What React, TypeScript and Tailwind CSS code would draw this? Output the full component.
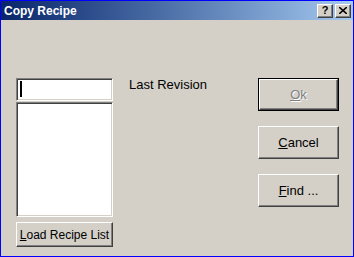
import React from 'react';

const raised =
  'border border-t-white border-l-white border-r-[#404040] border-b-[#404040] shadow-[inset_-1px_-1px_#808080,inset_1px_1px_#d4d0c8] bg-[#d4d0c8]';
const sunken =
  'border border-t-[#808080] border-l-[#808080] border-r-white border-b-white shadow-[inset_1px_1px_#404040,inset_-1px_-1px_#d4d0c8] bg-white';

function TitleButton({ children }: { children: React.ReactNode }) {
  return (
    <div
      className={`${raised} w-[16px] h-[14px] flex items-center justify-center text-[11px] font-bold leading-none text-black`}
    >
      {children}
    </div>
  );
}

export default function App() {
  return (
    <div
      className="w-[354px] h-[257px] border border-[#0000ff] bg-[#d4d0c8] flex flex-col overflow-hidden"
      style={{ fontFamily: '"Liberation Sans", Arial, sans-serif' }}
    >
      {/* title bar */}
      <div className="h-[19px] flex items-center pl-[3px] pr-[2px] bg-gradient-to-r from-[#0a246a] to-[#a6caf0]">
        <span className="flex-1 text-white font-bold text-[12px]">Copy Recipe</span>
        <div className="flex gap-[2px]">
          <TitleButton>?</TitleButton>
          <TitleButton>
            <svg width="8" height="7" viewBox="0 0 8 7">
              <path d="M0 0L8 7M8 0L0 7" stroke="black" strokeWidth="1.6" />
            </svg>
          </TitleButton>
        </div>
      </div>

      {/* body */}
      <div className="flex-1 flex pt-[58px] pl-[15px] pr-[14px]">
        <div className="w-[97px] flex flex-col">
          <div className={`${sunken} h-[23px] relative`}>
            <div className="absolute left-[3px] top-[2px] w-[2px] h-[16px] bg-black" />
          </div>
          <div className={`${sunken} h-[115px] mt-[1px]`} />
          <button
            className={`${raised} h-[25px] mt-[5px] text-[12px] text-black flex items-center justify-center whitespace-nowrap`}
          >
            <span>
              <u>L</u>oad Recipe List
            </span>
          </button>
        </div>

        <div className="flex-1 pl-[16px] text-[13px] leading-[14px] text-black">Last Revision</div>

        <div className="w-[81px] flex flex-col gap-[15px]">
          <div className="h-[33px] border border-black">
            <div className={`${raised} h-full flex items-center justify-center text-[13px]`}>
              <span className="text-[#808080] [text-shadow:1px_1px_#ffffff]">
                <u>O</u>k
              </span>
            </div>
          </div>
          <button className={`${raised} h-[33px] flex items-center justify-center text-[13px] text-black`}>
            <span>
              <u>C</u>ancel
            </span>
          </button>
          <button className={`${raised} h-[33px] flex items-center justify-center text-[13px] text-black`}>
            <span>
              <u>F</u>ind ...
            </span>
          </button>
        </div>
      </div>
    </div>
  );
}
